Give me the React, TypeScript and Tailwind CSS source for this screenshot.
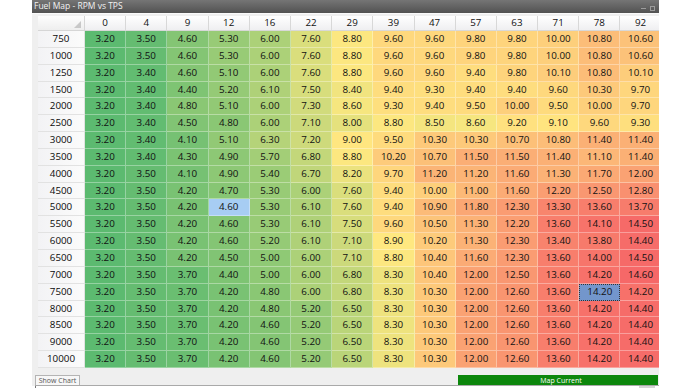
import React from "react";

const COLS = [0, 4, 9, 12, 16, 22, 29, 39, 47, 57, 63, 71, 78, 92];

const ROWS: [number, number[]][] = [
  [750, [3.2, 3.5, 4.6, 5.3, 6.0, 7.6, 8.8, 9.6, 9.6, 9.8, 9.8, 10.0, 10.8, 10.6]],
  [1000, [3.2, 3.5, 4.6, 5.3, 6.0, 7.6, 8.8, 9.6, 9.6, 9.8, 9.8, 10.0, 10.8, 10.6]],
  [1250, [3.2, 3.4, 4.6, 5.1, 6.0, 7.6, 8.8, 9.6, 9.6, 9.4, 9.8, 10.1, 10.8, 10.1]],
  [1500, [3.2, 3.4, 4.4, 5.2, 6.1, 7.5, 8.4, 9.4, 9.3, 9.4, 9.4, 9.6, 10.3, 9.7]],
  [2000, [3.2, 3.4, 4.8, 5.1, 6.0, 7.3, 8.6, 9.3, 9.4, 9.5, 10.0, 9.5, 10.0, 9.7]],
  [2500, [3.2, 3.4, 4.5, 4.8, 6.0, 7.1, 8.0, 8.8, 8.5, 8.6, 9.2, 9.1, 9.6, 9.3]],
  [3000, [3.2, 3.4, 4.1, 5.1, 6.3, 7.2, 9.0, 9.5, 10.3, 10.3, 10.7, 10.8, 11.4, 11.4]],
  [3500, [3.2, 3.4, 4.3, 4.9, 5.7, 6.8, 8.8, 10.2, 10.7, 11.5, 11.5, 11.4, 11.1, 11.4]],
  [4000, [3.2, 3.5, 4.1, 4.9, 5.4, 6.7, 8.2, 9.7, 11.2, 11.2, 11.6, 11.3, 11.7, 12.0]],
  [4500, [3.2, 3.5, 4.2, 4.7, 5.3, 6.0, 7.6, 9.4, 10.0, 11.0, 11.6, 12.2, 12.5, 12.8]],
  [5000, [3.2, 3.5, 4.2, 4.6, 5.3, 6.1, 7.6, 9.4, 10.9, 11.8, 12.3, 13.3, 13.6, 13.7]],
  [5500, [3.2, 3.5, 4.2, 4.6, 5.3, 6.1, 7.5, 9.6, 10.5, 11.3, 12.2, 13.6, 14.1, 14.5]],
  [6000, [3.2, 3.5, 4.2, 4.6, 5.2, 6.1, 7.1, 8.9, 10.2, 11.3, 12.3, 13.4, 13.8, 14.4]],
  [6500, [3.2, 3.5, 4.2, 4.5, 5.0, 6.0, 7.1, 8.8, 10.4, 11.6, 12.3, 13.6, 14.0, 14.5]],
  [7000, [3.2, 3.5, 3.7, 4.4, 5.0, 6.0, 6.8, 8.3, 10.4, 12.0, 12.5, 13.6, 14.2, 14.6]],
  [7500, [3.2, 3.5, 3.7, 4.2, 4.8, 6.0, 6.8, 8.3, 10.3, 12.0, 12.6, 13.6, 14.2, 14.2]],
  [8000, [3.2, 3.5, 3.7, 4.2, 4.8, 5.2, 6.5, 8.3, 10.3, 12.0, 12.6, 13.6, 14.2, 14.4]],
  [8500, [3.2, 3.5, 3.7, 4.2, 4.6, 5.2, 6.5, 8.3, 10.3, 12.0, 12.6, 13.6, 14.2, 14.4]],
  [9000, [3.2, 3.5, 3.7, 4.2, 4.6, 5.2, 6.5, 8.3, 10.3, 12.0, 12.6, 13.6, 14.2, 14.4]],
  [10000, [3.2, 3.5, 3.7, 4.2, 4.6, 5.2, 6.5, 8.3, 10.3, 12.0, 12.6, 13.6, 14.2, 14.4]],
];

const MIN = 3.2;
const MAX = 14.6;
const MID = (MIN + MAX) / 2;
const G = [92, 186, 112];
const Y = [255, 232, 128];
const R = [246, 104, 104];

function mix(a: number[], b: number[], t: number) {
  return a.map((v, i) => Math.round(v + (b[i] - v) * t));
}

function heat(v: number) {
  const c =
    v <= MID
      ? mix(G, Y, (v - MIN) / (MID - MIN))
      : mix(Y, R, Math.min(1, (v - MID) / (MAX - MID)));
  return `rgb(${c[0]},${c[1]},${c[2]})`;
}

export default function App() {
  return (
    <div
      className="w-[690px] h-[388px] bg-white overflow-hidden"
      style={{ fontFamily: '"Open Sans", "Liberation Sans", sans-serif' }}
    >
      <div className="ml-[32px] w-[627px] h-[388px] flex flex-col bg-[#efefef]">
        {/* title bar */}
        <div className="h-[13px] flex items-center justify-between bg-gradient-to-b from-[#757575] to-[#525252] pl-[2px]">
          <span className="text-[8.5px] leading-none text-[#f2f2f2]">Fuel Map - RPM vs TPS</span>
          <div className="flex items-center gap-[4px] pr-[4px] pt-[3px]">
            <div className="w-[5px] h-[1px] bg-[#9c9c9c]" />
            <div className="w-[5px] h-[5px] border border-[#9c9c9c]" />
          </div>
        </div>
        <div className="h-[3px] border-t border-[#fafafa] bg-[#f0f0f0]" />
        {/* grid */}
        <div className="ml-[6px] w-[621px] overflow-hidden">
          <div className="grid grid-cols-[47px_repeat(14,41.2px)] grid-rows-[15px_repeat(20,16.85px)] w-max text-[9.8px] text-[#111]">
            <div className="relative bg-gradient-to-b from-[#fdfdfd] to-[#eeeeee] border-r border-b border-[#d6d6d6]">
              <svg className="absolute right-[3px] bottom-[2px]" width="7" height="7" viewBox="0 0 7 7">
                <polygon points="7,0 7,7 0,7" fill="#c8c8c8" />
              </svg>
            </div>
            {COLS.map((c) => (
              <div
                key={c}
                className="flex items-center justify-center bg-gradient-to-b from-[#ffffff] to-[#efeff1] border-r border-b border-[#d8d8d8] leading-none"
              >
                {c}
              </div>
            ))}
            {ROWS.map(([rpm, vals]) => (
              <React.Fragment key={rpm}>
                <div className="flex items-center justify-center bg-gradient-to-r from-[#f3f3f5] to-[#fbfbfb] border-r border-b border-[#e2e2e2] leading-none text-[#0a0a0a]">
                  {rpm}
                </div>
                {vals.map((v, ci) => {
                  const sel1 = rpm === 5000 && ci === 3;
                  const sel2 = rpm === 7500 && ci === 12;
                  const bg = sel1 ? "#a7cdf3" : sel2 ? "#7396cc" : heat(v);
                  return (
                    <div
                      key={ci}
                      className={
                        sel2
                          ? "flex items-center justify-center leading-none border border-dotted border-[#333]"
                          : "flex items-center justify-center leading-none border-r border-b border-white/35"
                      }
                      style={{ backgroundColor: bg }}
                    >
                      {v.toFixed(2)}
                    </div>
                  );
                })}
              </React.Fragment>
            ))}
          </div>
        </div>
        {/* bottom */}
        <div className="h-[7px]" />
        <div className="h-[10px] flex items-end">
          <div className="ml-[3px] w-[45px] h-[10px] border border-b-0 border-[#b4b4b4] bg-[#f7f7f7] text-[7px] leading-[10px] text-[#555] text-center overflow-hidden whitespace-nowrap">
            Show Chart
          </div>
          <div className="flex-1" />
          <div className="w-[200px] h-[10px] bg-[#0c870c] overflow-hidden text-center text-[7px] leading-[11px] text-white pl-[6px] mr-[1px]">
            Map Current
          </div>
        </div>
        <div className="h-[1px] ml-[3px] bg-[#a9a9a9]" />
        <div className="flex-1 bg-white flex justify-between">
          <div className="ml-[3px] w-[1px] bg-[#777]" />
          <div className="w-[16px] mr-[4px] bg-[#d4d4d4]" />
        </div>
      </div>
    </div>
  );
}
